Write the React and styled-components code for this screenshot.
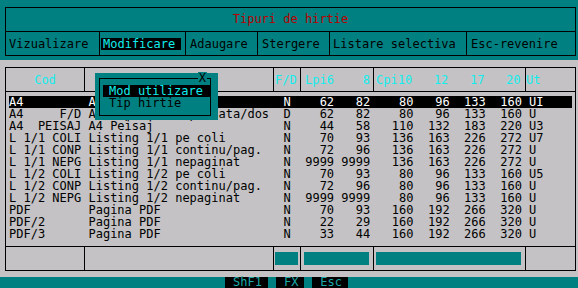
import React from 'react';
import styled, { createGlobalStyle } from 'styled-components';

const TEAL = '#008080';
const GRAY = '#c4c2c4';
const CYAN = '#10eeee';

const GlobalStyle = createGlobalStyle`
  html, body {
    margin: 0;
    padding: 0;
    background: ${TEAL};
  }
  body {
    font-family: "DejaVu Sans Mono", "Liberation Mono", monospace;
    font-size: 12px;
  }
`;

const Screen = styled.div`
  position: relative;
  width: 578px;
  height: 288px;
  display: flex;
  flex-direction: column;
  overflow: hidden;
  background: ${TEAL};
`;

const TopArea = styled.div`
  height: 60px;
  box-sizing: border-box;
  padding: 7px 2px 0 5px;
`;

const MenuPanel = styled.div`
  width: 571px;
  box-sizing: border-box;
  border: 1px solid #000;
`;

const TitleBar = styled.div`
  height: 23px;
  line-height: 23px;
  text-align: center;
  color: #b80000;
  border-bottom: 1px solid #000;
`;

const MenuBar = styled.div`
  display: flex;
  height: 23px;
`;

const MenuItem = styled.div`
  width: ${(p) => p.$w}px;
  box-sizing: border-box;
  display: flex;
  align-items: center;
  padding-left: ${(p) => p.$pad}px;
  border-right: 1px solid #000;
  white-space: pre;
  color: #000;

  &:last-child {
    border-right: none;
  }
`;

const ActiveItem = styled.span`
  line-height: 12px;
  padding: 0 6px 0 2px;
  background: #000;
  color: ${CYAN};
`;

const Desk = styled.div`
  height: 217px;
  box-sizing: border-box;
  padding: 7px 2px 0 5px;
  background: ${GRAY};
`;

const Table = styled.div`
  width: 571px;
  box-sizing: border-box;
  border: 1px solid #000;
`;

const Strip = styled.div`
  display: flex;
  height: 23px;
  border-bottom: ${(p) => (p.$last ? 'none' : '1px solid #000')};
`;

const Cell = styled.div`
  width: ${(p) => p.$w}px;
  box-sizing: border-box;
  display: flex;
  align-items: center;
  justify-content: ${(p) => (p.$center ? 'center' : 'flex-start')};
  padding-left: ${(p) => p.$pad || 0}px;
  border-right: 1px solid #000;
  white-space: pre;
  color: ${CYAN};

  &:last-child {
    border-right: none;
  }
`;

const TealBar = styled.div`
  flex: 1;
  height: 13px;
  margin: 0 ${(p) => p.$right}px 0 ${(p) => p.$left}px;
  background: ${TEAL};
`;

const Body = styled.div`
  height: 155px;
  box-sizing: border-box;
  padding: 4px 3px 0 3px;
  border-bottom: 1px solid #000;
`;

const Row = styled.div`
  display: flex;
  height: 12px;
  line-height: 12px;
  background: ${(p) => (p.$selected ? '#000' : 'transparent')};
  color: ${(p) => (p.$selected ? '#fff' : '#000')};
`;

const Field = styled.span`
  flex: none;
  width: ${(p) => p.$ch}ch;
  margin-left: ${(p) => p.$gap || 0}ch;
  text-align: ${(p) => (p.$right ? 'right' : 'left')};
  white-space: pre;
`;

const KeyBar = styled.div`
  display: flex;
  gap: 8px;
  height: 11px;
  padding-left: 225px;
  background: ${TEAL};
`;

const Key = styled.span`
  padding: 0 6px 0 8px;
  line-height: 11px;
  background: #000;
  color: #1aa8a8;
`;

const Popup = styled.div`
  position: absolute;
  left: 95px;
  top: 73px;
  width: 123px;
  height: 47px;
  box-sizing: border-box;
  padding: 5px 7px 4px 4px;
  background: ${TEAL};
`;

const Frame = styled.div`
  position: relative;
  height: 100%;
  box-sizing: border-box;
  padding: 6px 0 0 3px;
  border: 1px solid #000;
`;

const CloseMark = styled.span`
  position: absolute;
  top: -7px;
  right: 3px;
  padding: 0 1px;
  line-height: 12px;
  background: ${TEAL};
  color: #000;
`;

const Option = styled.div`
  height: 12px;
  line-height: 12px;
  padding-left: 6px;
  background: ${(p) => (p.$active ? '#000' : 'transparent')};
  color: ${(p) => (p.$active ? CYAN : '#000')};
`;

const menu = [
  { label: 'Vizualizare', w: 94, pad: 3 },
  { label: 'Modificare', w: 86, pad: 1, active: true },
  { label: 'Adaugare', w: 72, pad: 4 },
  { label: 'Stergere', w: 72, pad: 4 },
  { label: 'Listare selectiva', w: 137, pad: 3 },
  { label: 'Esc-revenire', w: 108, pad: 4 },
];

const columns = [79, 189, 27, 73, 152, 49];

const headers = [
  { text: 'Cod', center: true },
  { text: '' },
  { text: 'F/D', pad: 1 },
  { text: 'Lpi6    8', pad: 4 },
  { text: 'Cpi10   12   17   20', pad: 2 },
  { text: 'Ut', pad: 0 },
];

const bars = [null, null, [1, 2], [3, 4], [2, 4], null];

const rows = [
  ['A4', 'A4 Portret', 'N', [62, 82, 80, 96, 133, 160], 'UI'],
  ['A4     F/D', 'A4 Imprimarea pe fata/dos', 'D', [62, 82, 80, 96, 133, 160], 'U'],
  ['A4  PEISAJ', 'A4 Peisaj', 'N', [44, 58, 110, 132, 183, 220], 'U3'],
  ['L 1/1 COLI', 'Listing 1/1 pe coli', 'N', [70, 93, 136, 163, 226, 272], 'U7'],
  ['L 1/1 CONP', 'Listing 1/1 continu/pag.', 'N', [72, 96, 136, 163, 226, 272], 'U'],
  ['L 1/1 NEPG', 'Listing 1/1 nepaginat', 'N', [9999, 9999, 136, 163, 226, 272], 'U'],
  ['L 1/2 COLI', 'Listing 1/2 pe coli', 'N', [70, 93, 80, 96, 133, 160], 'U5'],
  ['L 1/2 CONP', 'Listing 1/2 continu/pag.', 'N', [72, 96, 80, 96, 133, 160], 'U'],
  ['L 1/2 NEPG', 'Listing 1/2 nepaginat', 'N', [9999, 9999, 80, 96, 133, 160], 'U'],
  ['PDF', 'Pagina PDF', 'N', [70, 93, 160, 192, 266, 320], 'U'],
  ['PDF/2', 'Pagina PDF', 'N', [22, 29, 160, 192, 266, 320], 'U'],
  ['PDF/3', 'Pagina PDF', 'N', [33, 44, 160, 192, 266, 320], 'U'],
];

const numWidths = [6, 5, 6, 5, 5, 5];

const App = () => (
  <>
    <GlobalStyle />
    <Screen>
      <TopArea>
        <MenuPanel>
          <TitleBar>Tipuri de hirtie</TitleBar>
          <MenuBar>
            {menu.map((m) => (
              <MenuItem key={m.label} $w={m.w} $pad={m.pad}>
                {m.active ? <ActiveItem>{m.label}</ActiveItem> : m.label}
              </MenuItem>
            ))}
          </MenuBar>
        </MenuPanel>
      </TopArea>

      <Desk>
        <Table>
          <Strip>
            {headers.map((h, i) => (
              <Cell key={i} $w={columns[i]} $center={h.center} $pad={h.pad}>
                {h.text}
              </Cell>
            ))}
          </Strip>
          <Body>
            {rows.map(([code, desc, flag, nums, ut], i) => (
              <Row key={i} $selected={i === 0}>
                <Field $ch={11}>{code}</Field>
                <Field $ch={27}>{desc}</Field>
                <Field $ch={1}>{flag}</Field>
                {nums.map((n, j) => (
                  <Field key={j} $ch={numWidths[j]} $right>
                    {n}
                  </Field>
                ))}
                <Field $ch={3} $gap={1}>{ut}</Field>
              </Row>
            ))}
          </Body>
          <Strip $last>
            {columns.map((w, i) => (
              <Cell key={i} $w={w}>
                {bars[i] && <TealBar $left={bars[i][0]} $right={bars[i][1]} />}
              </Cell>
            ))}
          </Strip>
        </Table>
      </Desk>

      <KeyBar>
        <Key>ShF1</Key>
        <Key>FX</Key>
        <Key>Esc</Key>
      </KeyBar>

      <Popup>
        <Frame>
          <CloseMark>X</CloseMark>
          <Option $active>Mod utilizare</Option>
          <Option>Tip hirtie</Option>
        </Frame>
      </Popup>
    </Screen>
  </>
);

export default App;
